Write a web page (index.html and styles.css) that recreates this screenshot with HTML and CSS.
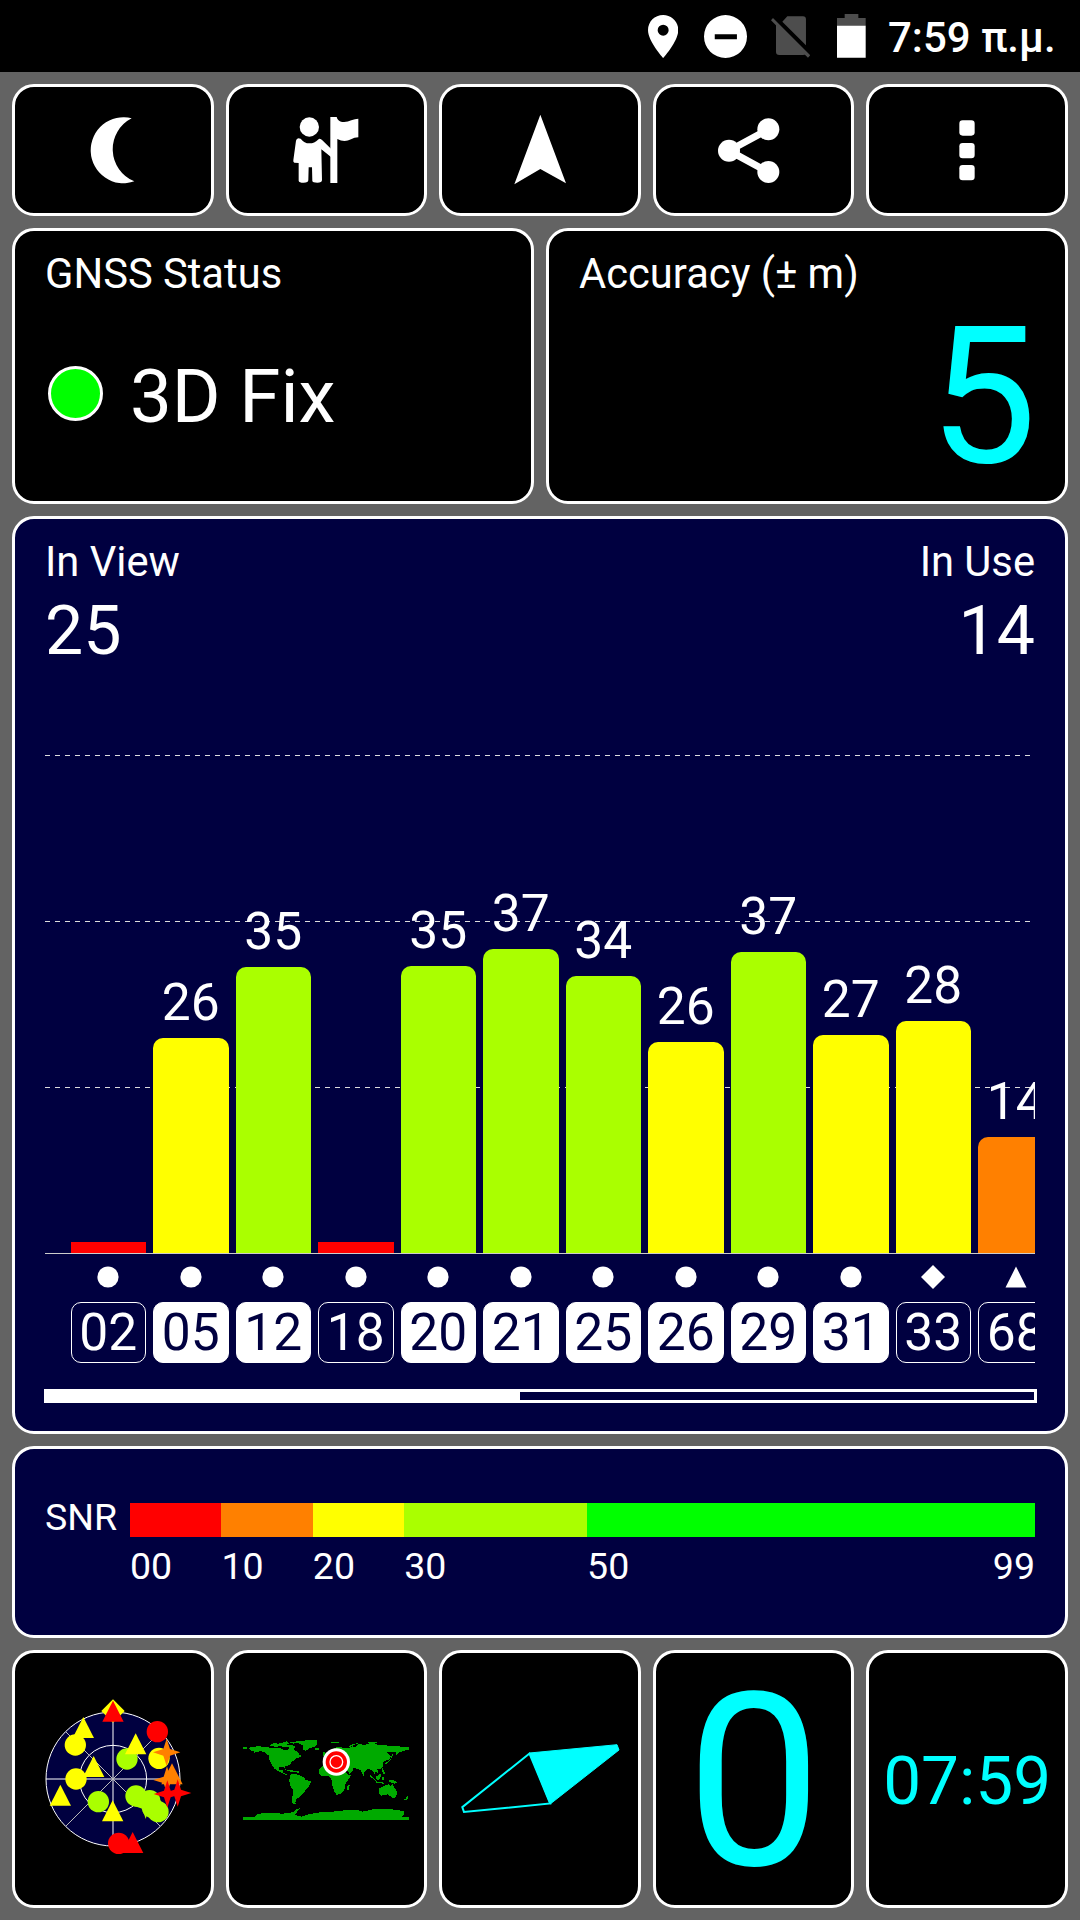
FILE: index.html
```html
<!DOCTYPE html>
<html lang="en">
<head>
  <meta charset="UTF-8">
  <meta name="viewport" content="width=device-width, initial-scale=1.0">
  <title>GNSS Status</title>
  <link rel="stylesheet" href="styles.css">
</head>
<body>

<header class="statusbar">
  <svg class="pin" viewBox="0 0 91 129"><path fill-rule="evenodd" d="M45.500 0C20 0 0 20 0 45C0 79 45.500 129 45.500 129S91 79 91 45C91 20 71 0 45.500 0zM45.500 29a16.500 16.500 0 1 1 0 33a16.500 16.500 0 1 1 0-33z"/></svg>
  <svg class="dnd" viewBox="0 0 128 128"><path fill-rule="evenodd" d="M64 0a64 64 0 1 1 0 128a64 64 0 1 1 0-128zM32 57v15h66v-15z"/></svg>
  <svg class="sim" viewBox="0 0 118 125"><path d="M49 1H96Q105 1 105 10V88L34 17zM15 24L105 114Q102 117 96 117H25Q15 117 15 107zM6 6L118 118L111 125L0 13z"/></svg>
  <svg class="battery" viewBox="0 0 86 131"><path class="dim" d="M23 0H64V12H86V36H0V12H23z"/><path d="M0 35H86V131H0z"/></svg>
  <time>7:59 π.μ.</time>
</header>

<main>
  <nav class="row five">
    <button class="card"><svg class="icon" viewBox="-110 -108 216 216"><path d="M54-95A98 99 0 1 0 62 94A104 104 0 0 1 54-95z"/></svg></button>
    <button class="card"><svg class="icon" viewBox="-109 -108 216 216">
      <circle cx="-51" cy="-69" r="29"/>
      <path d="M-91-28Q-89-39-77-34Q-66-20-51-20Q-35-20-25-31Q-19-37-12-29L14-4V21L-15-2L-13 90Q-13 98-27 98T-42 93L-43 52H-53L-54 90Q-54 98-68 98T-83 92V39L-96 38Q-100 37-99 31z"/>
      <path d="M12-99H31Q34-88 44-85Q60-82 75-89Q86-94 96-94V-38Q84-38 74-32Q54-21 33-33V99H12z"/>
    </svg></button>
    <button class="card"><svg class="icon" viewBox="-108 -108 216 216"><path d="M1-106L78 100L1 57L-77 103z"/></svg></button>
    <button class="card"><svg class="icon" viewBox="-108 -108 216 216">
      <path class="line" d="M43-62L-75 2L43 66"/>
      <circle cx="43" cy="-62" r="33"/><circle cx="-75" cy="2" r="33"/><circle cx="43" cy="66" r="33"/>
    </svg></button>
    <button class="card"><svg class="icon" viewBox="-108 -108 216 216">
      <rect x="-23" y="-89" width="46" height="46" rx="10"/><rect x="-23" y="-21" width="46" height="46" rx="10"/><rect x="-23" y="45" width="46" height="46" rx="10"/>
    </svg></button>
  </nav>

  <div class="row two">
    <section class="card info">
      <h2>GNSS Status</h2>
      <div class="fix"><span class="led"></span>3D Fix</div>
    </section>
    <section class="card info">
      <h2>Accuracy (± m)</h2>
      <div class="accuracy">5</div>
    </section>
  </div>

  <section class="card signal">
    <div class="counts">
      <div><h2>In View</h2><b>25</b></div>
      <div class="inuse"><h2>In Use</h2><b>14</b></div>
    </div>
    <div class="chart">
      <div class="sat"><div class="plot"><i class="bar red" style="height:11px"></i></div><svg viewBox="-12 -12 24 24"><circle r="10.600"/></svg><span class="prn">02</span></div>
      <div class="sat used"><div class="plot">26<i class="bar yellow" style="height:215px"></i></div><svg viewBox="-12 -12 24 24"><circle r="10.600"/></svg><span class="prn">05</span></div>
      <div class="sat used"><div class="plot">35<i class="bar lime" style="height:286px"></i></div><svg viewBox="-12 -12 24 24"><circle r="10.600"/></svg><span class="prn">12</span></div>
      <div class="sat"><div class="plot"><i class="bar red" style="height:11px"></i></div><svg viewBox="-12 -12 24 24"><circle r="10.600"/></svg><span class="prn">18</span></div>
      <div class="sat used"><div class="plot">35<i class="bar lime" style="height:287px"></i></div><svg viewBox="-12 -12 24 24"><circle r="10.600"/></svg><span class="prn">20</span></div>
      <div class="sat used"><div class="plot">37<i class="bar lime" style="height:304px"></i></div><svg viewBox="-12 -12 24 24"><circle r="10.600"/></svg><span class="prn">21</span></div>
      <div class="sat used"><div class="plot">34<i class="bar lime" style="height:277px"></i></div><svg viewBox="-12 -12 24 24"><circle r="10.600"/></svg><span class="prn">25</span></div>
      <div class="sat used"><div class="plot">26<i class="bar yellow" style="height:211px"></i></div><svg viewBox="-12 -12 24 24"><circle r="10.600"/></svg><span class="prn">26</span></div>
      <div class="sat used"><div class="plot">37<i class="bar lime" style="height:301px"></i></div><svg viewBox="-12 -12 24 24"><circle r="10.600"/></svg><span class="prn">29</span></div>
      <div class="sat used"><div class="plot">27<i class="bar yellow" style="height:218px"></i></div><svg viewBox="-12 -12 24 24"><circle r="10.600"/></svg><span class="prn">31</span></div>
      <div class="sat"><div class="plot">28<i class="bar yellow" style="height:232px"></i></div><svg viewBox="-12 -12 24 24"><path d="M0-12L12 0L0 12L-12 0z"/></svg><span class="prn">33</span></div>
      <div class="sat"><div class="plot">14<i class="bar orange" style="height:116px"></i></div><svg viewBox="-12 -12 24 24"><path d="M0-10.500L10.500 10.500H-10.500z"/></svg><span class="prn">68</span></div>
    </div>
    <div class="scroll"><div class="thumb"></div></div>
  </section>

  <section class="card snr">
    <span class="name">SNR</span>
    <div class="legend">
      <i class="red"></i><i class="orange"></i><i class="yellow"></i><i class="lime"></i><i class="green"></i>
      <span>00</span><span>10</span><span>20</span><span>30</span><span class="last"><span>50</span><span>99</span></span>
    </div>
  </section>

  <div class="row five">
    <div class="card">
      <svg class="sky" viewBox="-255 -285 510 570">
        <defs>
          <path id="tri" d="M0-32L32 31H-32z"/>
          <path id="star" d="M0-41L10-10L41 0L10 10L0 41L-10 10L-41 0L-10-10z"/>
          <circle id="dot" r="32"/>
        </defs>
        <circle class="disc" r="201"/>
        <circle class="grid" r="101"/>
        <path class="grid" d="M-201 0H201M0-201V201"/>
        <path class="grid thin" d="M-142-142L142 142M142-142L-142 142"/>
        <g class="y"><path d="M0-239L35-204L0-169L-35-204z"/><use href="#dot" x="-113" y="-102"/><use href="#tri" x="-89" y="-154"/></g>
        <use class="r" href="#tri" y="-203"/>
        <use class="r" href="#dot" x="133" y="-142"/>
        <use class="l" href="#dot" x="42" y="-60"/>
        <g class="y"><use href="#tri" x="68" y="-105"/><use href="#dot" x="138" y="-62"/><use href="#dot" x="-111" y="0"/><use href="#tri" x="-58" y="-37"/><use href="#tri" x="-158" y="49"/></g>
        <g class="l"><use href="#dot" x="-44" y="68"/><use href="#dot" x="69" y="51"/><use href="#dot" x="110" y="65"/><use href="#star" x="98" y="79"/><use href="#dot" x="118" y="85"/><use href="#dot" x="135" y="98"/></g>
        <use class="y" href="#tri" x="-1" y="96"/>
        <g class="o"><use href="#star" x="161" y="-80"/><use href="#tri" x="177" y="-15"/><use href="#star" x="162" y="3"/></g>
        <g class="r"><use href="#star" x="163" y="45"/><use href="#star" x="194" y="42"/><use href="#dot" x="17" y="193"/><use href="#tri" x="59" y="191"/></g>
      </svg>
    </div>
    <div class="card">
      <svg class="map" viewBox="3 -4 570 360">
        <g class="land">
          <path d="M40 81H50V86H40zM56 84L64 79L90 78L120 82H150L160 88H174L178 80L186 79L192 88L206 97V104L214 103V111L202 112L196 118L184 124L180 134L166 138V146L160 138L148 141L147 149L158 150L160 158L172 161V166L160 160L148 154L134 146L124 130L117 117L118 107L104 96L92 92L76 96L66 100L74 94L62 91z"/>
          <path d="M120 76L130 68L146 70L160 66L170 63L176 70L166 72L184 74L196 78L192 86L180 79L168 80L150 78L136 79zM172 64H196L210 61H218L204 68L190 70zM206 64L228 60H262V72L254 79L238 84L226 92L218 86L220 76L208 70zM254 84H268V88H256z"/>
          <path d="M164 147L184 150L206 153V157L180 154zM180 163L198 161L212 166L224 172V178L242 183V188L234 201L226 210L222 218L208 230L198 238L196 248L200 251L188 250L186 236L190 210L180 196L178 180z"/>
          <path d="M268 148L280 134L300 131L318 137L338 136L346 156L354 164H364L354 178L346 192L344 206L334 220L320 224L312 212L306 192L304 176L294 166L274 168L267 158zM350 198L360 192L356 208L350 210z"/>
          <path d="M280 130L281 120L290 118L292 110L300 106L310 98L304 92L316 82L332 79L342 84L358 84L366 78L376 80L384 72L408 73L420 68L438 70L444 74L480 76L500 78L537 80V88L522 91L508 96L498 107L498 95L486 94L472 96L482 108L480 116L470 120L460 125L458 137L456 144L442 146L444 158L436 154V164L426 150L414 145L404 154L400 168L392 150L382 145L368 143L370 151L358 160L350 148L338 140L328 130L314 132L302 128zM280 94L286 96L288 108L278 108zM486 97L490 104L480 120L468 132L464 130L476 122L484 112z"/>
          <path d="M304 66H326V69H304zM414 65H440V69H414zM356 77L370 70L384 69L372 74L360 80zM420 164L434 176L440 184L422 170zM438 169L450 160L454 166L448 178L440 178zM436 184L462 187V190L438 188zM456 168L464 172L458 182zM456 142L462 152L466 160L462 162L456 152zM474 178L492 180L504 188L492 190L478 184z"/>
          <path d="M446 206L458 199L468 194L478 192L482 198L488 190L494 204L502 214L500 224L492 235L484 230L474 222L452 226L446 220zM531 226L535 232L530 238H520L528 234z"/>
          <path d="M40 290H72L84 280L120 278L160 280L188 276L200 267L212 262L200 276L194 284L214 289L238 281L270 276L320 273L360 268L386 270L396 274L430 267L480 266L520 272L524 282L514 289H537V300H40z"/>
        </g>
        <circle class="mark" cx="319" cy="125" r="41"/>
        <circle class="target" cx="319" cy="125" r="32"/>
        <circle class="ring" cx="319" cy="125" r="19"/>
      </svg>
    </div>
    <div class="card">
      <svg class="needle" viewBox="460 1742 160 73"><path class="solid" d="M529.500 1753L617 1744.700L619 1750L550.200 1804z"/><path d="M529.500 1753.500L462.300 1807.200L464 1812L550.200 1803.500z"/></svg>
    </div>
    <div class="card speed">0</div>
    <div class="card clock">07:59</div>
  </div>
</main>

</body>
</html>
```

FILE: styles.css
```css
* {
  box-sizing: border-box;
}
body {
  font-family: Roboto, sans-serif;
  background: #636363;
  color: #fff;
  margin: 0;
  width: 1080px;
  height: 1920px;
  overflow: hidden;
}
svg {
  display: block;
  fill: #fff;
}

.statusbar {
  display: flex;
  justify-content: flex-end;
  align-items: flex-start;
  height: 72px;
  padding: 14px 25px 0 0;
  background: #000;
}
.pin { width: 30.300px; height: 43px; margin: 1px 25.700px 0 0; }
.dnd { width: 43px; height: 43px; margin: 1px 24px 0 0; }
.sim { width: 39.300px; height: 41.700px; margin: 2px 27px 0 0; fill: #4d4d4d; }
.battery { width: 28.700px; height: 43.700px; margin-right: 22px; }
.dim { fill: #4d4d4d; }
time {
  font-size: 42px;
  font-weight: 500;
  line-height: 48px;
  width: 167px;
  white-space: nowrap;
}

main {
  display: grid;
  grid-template-columns: minmax(0, 1fr);
  grid-template-rows: 132px 275.600px 918.400px 191.600px 258.400px;
  gap: 12px;
  padding: 12px;
}
.row {
  display: grid;
  grid-template-rows: 100%;
  gap: 12px;
}
.five { grid-template-columns: repeat(5, minmax(0, 1fr)); }
.two { grid-template-columns: repeat(2, minmax(0, 1fr)); }
.five .card {
  display: flex;
  justify-content: center;
  align-items: center;
  padding: 0;
}
.card {
  background: #000;
  border: 3px solid #fff;
  border-radius: 22px;
  color: inherit;
  font-family: inherit;
}
.icon { width: 72px; height: 72px; }
.line { fill: none; stroke: #fff; stroke-width: 21; }

h2 {
  font-size: 41.700px;
  font-weight: 400;
  line-height: 48px;
  margin: 0;
}
.info { padding: 19px 30px 0; }
.fix {
  display: flex;
  align-items: center;
  font-size: 74.500px;
  line-height: 86px;
  margin-top: 56px;
}
.led {
  width: 55px;
  height: 55px;
  margin: 0 27px 8px 3px;
  background: #0f0;
  border: 3px solid #fff;
  border-radius: 50%;
}
.accuracy {
  font-size: 192px;
  line-height: 192px;
  margin: 3px -2px 0 0;
  text-align: right;
  color: #0ff;
}

.signal, .snr {
  background: #000040;
  padding: 0 30px;
}
.counts {
  display: flex;
  justify-content: space-between;
  height: 181.400px;
  padding-top: 19px;
}
.counts b {
  display: block;
  font-size: 68px;
  font-weight: 400;
  line-height: 60px;
  margin-top: 15px;
}
.inuse { text-align: right; }

/* 20 dB per grid line, 8.3px per dB */
.chart {
  --dash: repeating-linear-gradient(90deg, #ddd 0 5px, transparent 5px 10px);
  display: flex;
  gap: 7px;
  padding-left: 25.500px;
  overflow: hidden;
  background:
    var(--dash) 0 55px / 100% 1px no-repeat,
    var(--dash) 0 221px / 100% 1px no-repeat,
    var(--dash) 0 387px / 100% 1px no-repeat,
    linear-gradient(#ccc, #ccc) 0 553px / 100% 1px no-repeat;
}
.sat {
  flex: 0 0 75.500px;
  display: flex;
  flex-direction: column;
  align-items: center;
  font-size: 51.500px;
  line-height: 60px;
}
.plot {
  display: flex;
  flex-direction: column;
  justify-content: flex-end;
  align-items: center;
  width: 100%;
  height: 553px;
}
.bar {
  width: 100%;
  margin-top: 5px;
  border-radius: 10px 10px 0 0;
}
.bar.red { border-radius: 0; }
.sat svg { width: 24px; height: 24px; margin: 12px 0 13px; }
.prn {
  width: 100%;
  height: 61px;
  line-height: 60px;
  border: 1px solid #fff;
  border-radius: 10px;
  text-align: center;
}
.used .prn { background: #fff; color: #000040; }
.red { background: #f00; }
.orange { background: #ff8000; }
.yellow { background: #ff0; }
.lime { background: #af0; }
.green { background: #0f0; }

.scroll {
  height: 14px;
  margin: 26px -2px 0 -1px;
  border: 3px solid #fff;
}
.thumb { width: 473px; height: 100%; background: #fff; }

.snr {
  display: flex;
  padding-top: 54px;
  font-size: 37.500px;
}
.name { width: 85px; line-height: 29px; }
.legend {
  flex: 1;
  display: grid;
  grid-template-columns: 10fr 10fr 10fr 20fr 49fr;
  grid-template-rows: 34px 44px;
  row-gap: 7px;
  line-height: 44px;
}
.last { display: flex; justify-content: space-between; }

.sky { width: 170px; height: 190px; flex: none; }
.disc { fill: #000040; stroke: #fff; stroke-width: 3; }
.grid { fill: none; stroke: #fff; stroke-width: 3; }
.thin { stroke: #bbb; }
.y { fill: #ff0; }
.r { fill: #f00; }
.l { fill: #af0; }
.o { fill: #ff8000; }
.map { width: 190px; height: 120px; flex: none; }
.land { fill: #0a0; shape-rendering: crispEdges; }
.mark { fill: #fff; }
.target { fill: #f00; }
.ring { fill: none; stroke: #fff; stroke-width: 4; }
.needle {
  width: 160px;
  height: 73px;
  fill: none;
  stroke: #0ff;
  stroke-width: 2;
  overflow: visible;
}
.solid { fill: #0ff; stroke-width: 1; }
.speed, .clock { color: #0ff; }
.speed { font-size: 241px; line-height: 240px; }
.five .speed { padding: 8px 0 0 1px; }
.clock { font-size: 67.500px; }
.five .clock { padding-top: 3px; }
```
